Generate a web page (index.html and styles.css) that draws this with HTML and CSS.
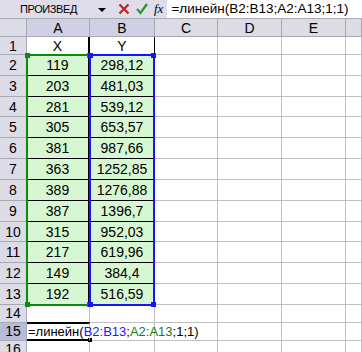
FILE: index.html
```html
<!DOCTYPE html>
<html lang="ru">
<head>
  <meta charset="UTF-8" />
  <title>линейн</title>
  <link rel="stylesheet" href="styles.css">
</head>
<body>
  <!-- строка формул -->
  <div class="fbar">
    <div class="namebox">ПРОИЗВЕД</div>
    <span class="drop"></span>
    <svg class="ico" width="12" height="12" viewBox="0 0 12 12">
      <path d="M1.5,1.5 L10.5,10.5 M10.5,1.5 L1.5,10.5" stroke="#c0282a" stroke-width="2.4"/>
    </svg>
    <svg class="ico" width="12" height="12" viewBox="0 0 12 12">
      <path d="M1,6 L4.5,10 L11,1" stroke="#1f9a28" stroke-width="2.2" fill="none"/>
    </svg>
    <span class="fx">fx</span>
    <div class="fvalue">=линейн(B2:B13;A2:A13;1;1)</div>
  </div>

  <div class="sheet">
    <div class="hd corner"></div>
    <div class="hd sel">A</div>
    <div class="hd sel">B</div>
    <div class="hd">C</div>
    <div class="hd">D</div>
    <div class="hd">E</div>
    <div class="hd"></div>

    <div class="rh">1</div>
    <div class="c t a">X</div>
    <div class="c t b">Y</div>
    <div class="c"></div><div class="c"></div><div class="c"></div><div class="c"></div>

    <div class="rh">2</div><div class="c t a g">119</div><div class="c t b g">298,12</div><div class="c"></div><div class="c"></div><div class="c"></div><div class="c"></div>
    <div class="rh">3</div><div class="c t a g">203</div><div class="c t b g">481,03</div><div class="c"></div><div class="c"></div><div class="c"></div><div class="c"></div>
    <div class="rh">4</div><div class="c t a g">281</div><div class="c t b g">539,12</div><div class="c"></div><div class="c"></div><div class="c"></div><div class="c"></div>
    <div class="rh">5</div><div class="c t a g">305</div><div class="c t b g">653,57</div><div class="c"></div><div class="c"></div><div class="c"></div><div class="c"></div>
    <div class="rh">6</div><div class="c t a g">381</div><div class="c t b g">987,66</div><div class="c"></div><div class="c"></div><div class="c"></div><div class="c"></div>
    <div class="rh">7</div><div class="c t a g">363</div><div class="c t b g">1252,85</div><div class="c"></div><div class="c"></div><div class="c"></div><div class="c"></div>
    <div class="rh">8</div><div class="c t a g">389</div><div class="c t b g">1276,88</div><div class="c"></div><div class="c"></div><div class="c"></div><div class="c"></div>
    <div class="rh">9</div><div class="c t a g">387</div><div class="c t b g">1396,7</div><div class="c"></div><div class="c"></div><div class="c"></div><div class="c"></div>
    <div class="rh">10</div><div class="c t a g">315</div><div class="c t b g">952,03</div><div class="c"></div><div class="c"></div><div class="c"></div><div class="c"></div>
    <div class="rh">11</div><div class="c t a g">217</div><div class="c t b g">619,96</div><div class="c"></div><div class="c"></div><div class="c"></div><div class="c"></div>
    <div class="rh">12</div><div class="c t a g">149</div><div class="c t b g">384,4</div><div class="c"></div><div class="c"></div><div class="c"></div><div class="c"></div>
    <div class="rh">13</div><div class="c t a g">192</div><div class="c t b g">516,59</div><div class="c"></div><div class="c"></div><div class="c"></div><div class="c"></div>

    <div class="rh">14</div><div class="c"></div><div class="c"></div><div class="c"></div><div class="c"></div><div class="c"></div><div class="c"></div>
    <div class="rh act">15</div>
    <div class="c edit">=линейн(<span class="blue">B2:B13</span>;<span class="green">A2:A13</span>;1;1)</div>
    <div class="c"></div><div class="c"></div><div class="c"></div><div class="c"></div><div class="c"></div>
    <div class="rh">16</div><div class="c"></div><div class="c"></div><div class="c"></div><div class="c"></div><div class="c"></div><div class="c"></div>

    <!-- выделенные диапазоны -->
    <div class="range ra"><i class="h tl"></i><i class="h tr"></i><i class="h bl"></i><i class="h br"></i></div>
    <div class="range rb"><i class="h tl"></i><i class="h tr"></i><i class="h bl"></i><i class="h br"></i></div>
    <div class="fill"></div>
  </div>
</body>
</html>
```

FILE: styles.css
```css
body {
  margin: 0;
  background: #fff;
  font-family: "Liberation Sans", Arial, sans-serif;
  font-size: 14px;
  color: #000;
  overflow: hidden;
}

/* строка формул */
.fbar {
  display: flex;
  align-items: center;
  height: 18px;
  background: #dedde9;
  border-bottom: 1px solid #a9a9b8;
}
.namebox {
  width: 78px;
  padding-left: 20px;
  font-size: 11px;
  letter-spacing: -0.4px;
}
.drop {
  width: 0; height: 0;
  border-left: 4px solid transparent;
  border-right: 4px solid transparent;
  border-top: 4px solid #000;
  margin: 2px 12px 0 0;
}
.ico {
  margin-right: 6px;
}
.fx {
  font-family: "Liberation Serif", serif;
  font-style: italic;
  font-size: 13px;
  margin: 0 4px 0 0;
}
.fvalue {
  flex: 1;
  height: 18px;
  line-height: 17px;
  background: #fff;
  padding-left: 4px;
  font-size: 13.5px;
  white-space: nowrap;
  overflow: hidden;
}

/* лист */
.sheet {
  position: relative;
  display: grid;
  grid-template-columns: 27px 63px 65px 63px 64px 64px 16px;
  grid-template-rows: 18px 18px repeat(12, 20.83px) 18px 18px 18px;
}
.hd, .rh {
  background: #dcdce6;
  border-right: 1px solid #a8a8b4;
  border-bottom: 1px solid #a8a8b4;
  display: flex;
  align-items: center;
  justify-content: center;
}
.hd.sel {
  background: #cfd0e4;
}
.rh.act {
  background: #b7bcdb;
}
.c {
  border-right: 1px solid #c0c0c0;
  border-bottom: 1px solid #c0c0c0;
  display: flex;
  align-items: center;
  justify-content: center;
  white-space: nowrap;
}
.c.t {
  border-bottom-color: #000;
}
.c.a { border-right: 2px solid #000; }
.c.b { border-right-color: #000; }
.c.g {
  background: #d7f6d2;
}
.c.edit {
  justify-content: flex-start;
  padding-left: 1px;
  font-size: 13px;
  overflow: visible;
  position: relative;
  z-index: 2;
  border-top: 2px solid #000;
  border-bottom: 2px solid #000;
  margin-top: -1px;
}
.blue { color: #1a1aff; }
.green { color: #157d15; }

/* рамки диапазонов */
.range {
  position: absolute;
  top: 35px;
  height: 248px;
  border: 2px solid;
}
.ra {
  left: 26px;
  width: 61px;
  border-color: #0b8a0b;
}
.rb {
  left: 89px;
  width: 62px;
  border-color: #1515ff;
}
.h {
  position: absolute;
  width: 5px;
  height: 5px;
}
.ra .h { background: #0b8a0b; }
.rb .h { background: #1515ff; }
.tl { left: -3px; top: -3px; }
.tr { right: -3px; top: -3px; }
.bl { left: -3px; bottom: -3px; }
.br { right: -3px; bottom: -3px; }
.fill {
  position: absolute;
  left: 88px;
  top: 319px;
  width: 4px;
  height: 4px;
  background: #000;
}
```
